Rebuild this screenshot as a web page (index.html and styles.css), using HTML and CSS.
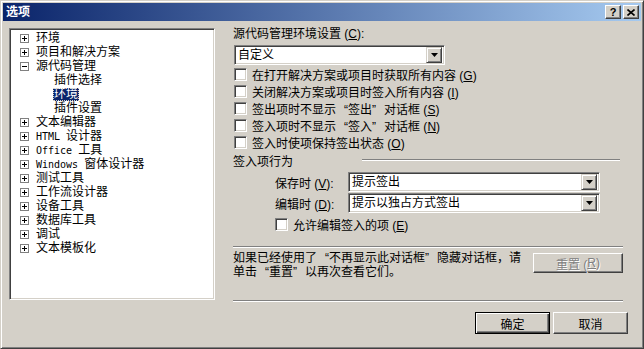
FILE: index.html
```html
<!DOCTYPE html>
<html lang="zh-CN">
<head>
<meta charset="utf-8">
<title>选项</title>
<link rel="stylesheet" href="styles.css">
</head>
<body>
<div class="window">
  <div class="titlebar">
    <span class="title">选项</span>
    <div class="caption-buttons">
      <span class="cap-btn help">?</span>
      <span class="cap-btn"><svg width="8" height="7" viewBox="0 0 8 7"><path d="M0.5 0.5 L7.5 6.5 M7.5 0.5 L0.5 6.5" stroke="#000" stroke-width="1.6" fill="none"/></svg></span>
    </div>
  </div>
  <div class="main">
    <div class="tree">
      <div class="node"><span class="exp plus"></span><span class="label">环境</span></div>
      <div class="node"><span class="exp plus"></span><span class="label">项目和解决方案</span></div>
      <div class="node"><span class="exp"></span><span class="label">源代码管理</span></div>
      <div class="node child"><span class="label">插件选择</span></div>
      <div class="node child"><span class="label selected">环境</span></div>
      <div class="node child"><span class="label">插件设置</span></div>
      <div class="node"><span class="exp plus"></span><span class="label">文本编辑器</span></div>
      <div class="node"><span class="exp plus"></span><span class="label"><span class="mono">HTML </span>设计器</span></div>
      <div class="node"><span class="exp plus"></span><span class="label"><span class="mono">Office </span>工具</span></div>
      <div class="node"><span class="exp plus"></span><span class="label"><span class="mono">Windows </span>窗体设计器</span></div>
      <div class="node"><span class="exp plus"></span><span class="label">测试工具</span></div>
      <div class="node"><span class="exp plus"></span><span class="label">工作流设计器</span></div>
      <div class="node"><span class="exp plus"></span><span class="label">设备工具</span></div>
      <div class="node"><span class="exp plus"></span><span class="label">数据库工具</span></div>
      <div class="node"><span class="exp plus"></span><span class="label">调试</span></div>
      <div class="node"><span class="exp plus"></span><span class="label">文本模板化</span></div>
    </div>
    <div class="panel">
      <div class="field-label">源代码管理环境设置 (<u>C</u>):</div>
      <div class="combo combo-wide">
        <span class="combo-text">自定义</span>
        <span class="combo-btn"><svg width="7" height="4" viewBox="0 0 7 4"><path d="M0 0 H7 L3.5 4 Z" fill="#000"/></svg></span>
      </div>
      <div class="checks">
        <div class="check-row"><span class="checkbox"></span><span>在打开解决方案或项目时获取所有内容 (<u>G</u>)</span></div>
        <div class="check-row"><span class="checkbox"></span><span>关闭解决方案或项目时签入所有内容 (<u>I</u>)</span></div>
        <div class="check-row"><span class="checkbox"></span><span>签出项时不显示<span class="q ql">“</span>签出<span class="q qr">”</span>对话框 (<u>S</u>)</span></div>
        <div class="check-row"><span class="checkbox"></span><span>签入项时不显示<span class="q ql">“</span>签入<span class="q qr">”</span>对话框 (<u>N</u>)</span></div>
        <div class="check-row"><span class="checkbox"></span><span>签入时使项保持签出状态 (<u>O</u>)</span></div>
      </div>
      <div class="group-head">
        <span>签入项行为</span>
        <span class="group-line"></span>
      </div>
      <div class="combo-rows">
        <div class="combo-row">
          <span class="row-label">保存时 (<u>V</u>):</span>
          <div class="combo combo-long">
            <span class="combo-text">提示签出</span>
            <span class="combo-btn"><svg width="7" height="4" viewBox="0 0 7 4"><path d="M0 0 H7 L3.5 4 Z" fill="#000"/></svg></span>
          </div>
        </div>
        <div class="combo-row">
          <span class="row-label">编辑时 (<u>D</u>):</span>
          <div class="combo combo-long">
            <span class="combo-text">提示以独占方式签出</span>
            <span class="combo-btn"><svg width="7" height="4" viewBox="0 0 7 4"><path d="M0 0 H7 L3.5 4 Z" fill="#000"/></svg></span>
          </div>
        </div>
      </div>
      <div class="check-row indented"><span class="checkbox"></span><span>允许编辑签入的项 (<u>E</u>)</span></div>
      <div class="separator sep-first"></div>
      <div class="info-row">
        <p class="info-text">如果已经使用了<span class="q ql">“</span>不再显示此对话框<span class="q qr">”</span>隐藏对话框，请<br>单击<span class="q ql">“</span>重置<span class="q qr">”</span>以再次查看它们。</p>
        <span class="button disabled reset">重置 (<u>R</u>)</span>
      </div>
      <div class="separator sep-second"></div>
      <div class="actions">
        <span class="button default">确定</span>
        <span class="button">取消</span>
      </div>
    </div>
  </div>
</div>
</body>
</html>
```

FILE: styles.css
```css
* { box-sizing: border-box; }
html, body { margin: 0; padding: 0; }
body {
  width: 644px;
  height: 349px;
  overflow: hidden;
  background: #d4d0c8;
  font-family: "Liberation Sans", "Noto Sans CJK SC", "Noto Sans CJK JP", sans-serif;
  font-size: 12px;
  color: #000;
}
u { text-decoration: underline; text-underline-offset: 1px; }

.window {
  width: 644px;
  height: 349px;
  background: #d4d0c8;
  border: 1px solid;
  border-color: #d4d0c8 #404040 #404040 #d4d0c8;
  box-shadow: inset 1px 1px #fff, inset -1px -1px #808080;
  padding: 2px;
  display: flex;
  flex-direction: column;
}

.titlebar {
  height: 18px;
  flex: none;
  background: linear-gradient(to right, #0a246a, #a6caf0);
  display: flex;
  align-items: center;
  justify-content: space-between;
  padding: 0 2px 0 3px;
}
.title {
  color: #fff;
  font-weight: bold;
  font-size: 12px;
  line-height: 18px;
}
.caption-buttons { display: flex; gap: 2px; }
.cap-btn {
  width: 16px;
  height: 14px;
  background: #d4d0c8;
  border: 1px solid;
  border-color: #fff #404040 #404040 #fff;
  box-shadow: inset -1px -1px #808080, inset 1px 1px #d4d0c8;
  display: flex;
  align-items: center;
  justify-content: center;
}
.cap-btn.help {
  font-weight: bold;
  font-size: 11px;
  line-height: 12px;
}

.main {
  display: flex;
  align-items: flex-start;
  padding: 7px 0 0 6px;
}

.tree {
  width: 206px;
  height: 272px;
  flex: none;
  background: #fff;
  border: 1px solid;
  border-color: #808080 #fff #fff #808080;
  box-shadow: inset 1px 1px #404040, inset -1px -1px #d4d0c8;
  padding: 2px 0 0 2px;
}
.node {
  height: 14px;
  display: flex;
  align-items: center;
  padding-left: 8px;
  white-space: nowrap;
}
.node.child { padding-left: 41px; }
.exp {
  width: 9px;
  height: 9px;
  flex: none;
  border: 1px solid #808080;
  background: #fff;
  position: relative;
  margin-right: 7px;
}
.exp::before {
  content: "";
  position: absolute;
  left: 1px;
  top: 3px;
  width: 5px;
  height: 1px;
  background: #000;
}
.exp.plus::after {
  content: "";
  position: absolute;
  left: 3px;
  top: 1px;
  width: 1px;
  height: 5px;
  background: #000;
}
.label { line-height: 13px; padding: 0 1px; }
.node .label { margin-left: -1px; }
.node.child .label { margin-left: 0; }
.label.selected {
  background: #0a246a;
  color: #fff;
  outline: 1px dotted #d4d0c8;
  outline-offset: -1px;
}
.mono {
  font-family: "DejaVu Sans Mono", monospace;
  font-size: 10px;
  white-space: pre;
}

.q { display: inline-block; width: 12px; }
.ql { text-align: right; }
.qr { text-align: left; }

.panel {
  margin-left: 18px;
  width: 395px;
  flex: none;
  display: flex;
  flex-direction: column;
}
.field-label { height: 13px; line-height: 13px; white-space: nowrap; }

.combo {
  height: 20px;
  background: #fff;
  border: 1px solid;
  border-color: #808080 #fff #fff #808080;
  box-shadow: inset 1px 1px #404040, inset -1px -1px #d4d0c8;
  padding: 2px;
  display: flex;
  align-items: center;
}
.combo-wide { width: 211px; margin: 4px 0 0 1px; }
.combo-long { width: 252px; }
.combo-text { flex: 1; padding-left: 1px; line-height: 16px; white-space: nowrap; }
.combo-btn {
  width: 16px;
  height: 16px;
  flex: none;
  background: #d4d0c8;
  border: 1px solid;
  border-color: #d4d0c8 #404040 #404040 #d4d0c8;
  box-shadow: inset 1px 1px #fff, inset -1px -1px #808080;
  display: flex;
  align-items: center;
  justify-content: center;
}

.checks { margin-top: 1px; display: flex; flex-direction: column; }
.check-row {
  height: 17px;
  display: flex;
  align-items: center;
  white-space: nowrap;
  padding-left: 1px;
}
.checkbox {
  width: 13px;
  height: 13px;
  flex: none;
  background: #fff;
  border: 1px solid;
  border-color: #808080 #fff #fff #808080;
  box-shadow: inset 1px 1px #404040, inset -1px -1px #d4d0c8;
  margin-right: 5px;
}
.check-row.indented { padding-left: 42px; margin-top: 3px; }

.group-head {
  margin-top: 2px;
  height: 14px;
  display: flex;
  align-items: center;
  white-space: nowrap;
}
.group-line {
  width: 258px;
  height: 2px;
  margin-left: 69px;
  border-top: 1px solid #808080;
  border-bottom: 1px solid #fff;
}

.combo-rows { margin-top: 5px; display: flex; flex-direction: column; gap: 1px; }
.combo-row { display: flex; align-items: center; padding-left: 42px; }
.row-label { width: 73px; flex: none; white-space: nowrap; }

.separator {
  width: 390px;
  height: 2px;
  border-top: 1px solid #808080;
  border-bottom: 1px solid #fff;
}
.sep-first { margin-top: 13px; }
.sep-second { margin-top: 24px; }

.info-row {
  width: 390px;
  margin-top: 3px;
  height: 25px;
  display: flex;
  justify-content: space-between;
  align-items: flex-start;
}
.info-text { margin: 0; line-height: 14px; white-space: nowrap; }
.info-text .q { line-height: 13px; }

.button {
  height: 22px;
  width: 75px;
  background: #d4d0c8;
  border: 1px solid;
  border-color: #fff #404040 #404040 #fff;
  box-shadow: inset -1px -1px #808080, inset 1px 1px #d4d0c8;
  display: flex;
  align-items: center;
  justify-content: center;
  white-space: nowrap;
}
.button.reset { width: 90px; height: 20px; margin-top: 2px; }
.button.disabled { color: #808080; text-shadow: 1px 1px #fff; }
.button.default {
  border: 1px solid #000;
  box-shadow: inset 1px 1px #fff, inset -1px -1px #404040, inset -2px -2px #808080;
}

.actions {
  margin-top: 10px;
  display: flex;
  justify-content: flex-end;
  gap: 3px;
}
```
